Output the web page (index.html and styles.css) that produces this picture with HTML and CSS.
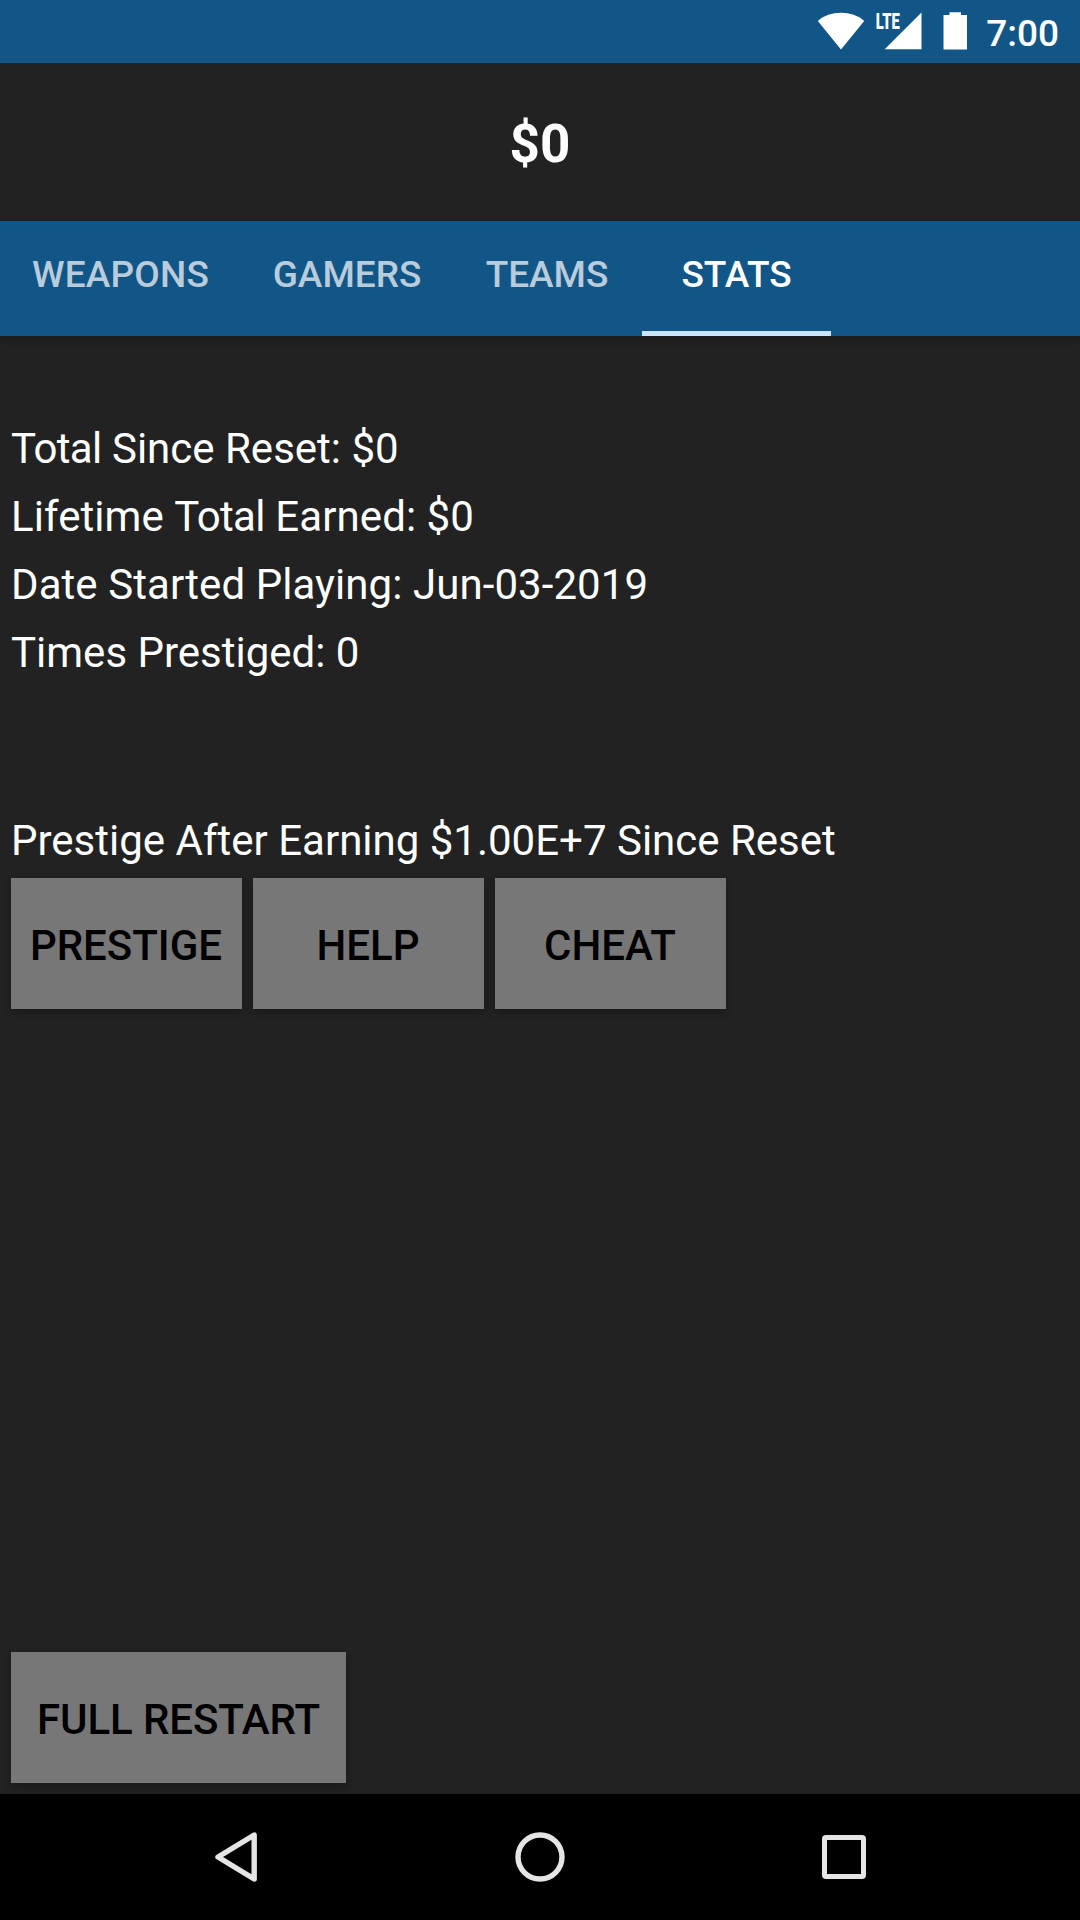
FILE: index.html
```html
<!DOCTYPE html>
<html lang="en">
<head>
<meta charset="utf-8">
<title>Stats</title>
<link rel="stylesheet" href="styles.css">
</head>
<body>
<header class="status">
  <svg class="status-icons" viewBox="0 0 160 63" width="160" height="63" fill="#fff">
    <path d="M24 49.500 0.800 21C7 15.500 15 12.800 24 12.800S41 15.500 47.200 21Z"/>
    <path d="M104.500 12.500V49.300H67.700Z"/>
    <path class="gap" d="M58 10H83V30.500H58Z"/>
    <g transform="translate(58.800 29) scale(1 1.250)">
      <text class="lte" textLength="24" lengthAdjust="spacingAndGlyphs">LTE</text>
    </g>
    <path d="M132.500 12.300h11.500v2.700h6v34.500h-23.500v-34.500h6z"/>
  </svg>
  <span class="clock">7:00</span>
</header>
<div class="money">$0</div>
<nav class="tabs">
  <a class="tab weapons">WEAPONS</a>
  <a class="tab gamers">GAMERS</a>
  <a class="tab teams">TEAMS</a>
  <a class="tab stats active">STATS</a>
</nav>
<main class="content">
  <div class="lines">
    <div><span class="tight">Total</span> Since Reset: $0</div>
    <div class="wide">Lifetime <span class="tight">Total</span> Earned: $0</div>
    <div class="wide">Date Started Playing: Jun-03-2019</div>
    <div>Times Prestiged: 0</div>
  </div>
  <div class="notice">Prestige After Earning $1.00E+7 Since Reset</div>
  <div class="actions">
    <button class="btn">PRESTIGE</button>
    <button class="btn">HELP</button>
    <button class="btn">CHEAT</button>
  </div>
  <button class="btn restart">FULL RESTART</button>
</main>
<footer class="navbar">
  <svg viewBox="0 0 1080 126" width="1080" height="126" fill="none" stroke="#e5e5e5" stroke-width="5.400" stroke-linejoin="round">
    <path d="M254.200 41V85L218 63Z"/>
    <circle cx="540" cy="63" r="22"/>
    <rect x="824.500" y="43.500" width="39" height="39" rx="1.500" stroke-width="5"/>
  </svg>
</footer>
</body>
</html>
```
FILE: styles.css
```css
* { box-sizing: border-box; }
body {
  margin: 0;
  width: 1080px;
  height: 1920px;
  display: flex;
  flex-direction: column;
  background: #222;
  color: #fff;
  font-family: Roboto, sans-serif;
  overflow: hidden;
}
.status {
  height: 63px;
  background: #125687;
  display: flex;
  justify-content: flex-end;
  padding-right: 21px;
}
.status-icons { margin-right: 9px; }
.gap { fill: #125687; }
.lte { font: 900 18px Roboto, sans-serif; }
.clock { font-size: 37px; font-weight: 500; line-height: 68px; }
.money {
  height: 158px;
  text-align: center;
  font-size: 53px;
  font-weight: 700;
  line-height: 163px;
}
.tabs {
  height: 115px;
  display: flex;
  background: #125687;
  box-shadow: 0 4px 10px rgba(0, 0, 0, .2);
}
.tab {
  height: 115px;
  text-align: center;
  font-size: 37px;
  font-weight: 500;
  line-height: 107px;
  color: #b8ccdb;
}
.weapons { width: 241px; letter-spacing: .2px; }
.gamers { width: 212px; }
.teams { width: 189px; padding-right: 1px; }
.stats { width: 189px; }
.active { color: #fff; border-bottom: 5px solid #c8e6ff; }
.content {
  flex: 1;
  display: flex;
  flex-direction: column;
  padding: 79px 11px 11px;
  font-size: 42px;
}
.lines { line-height: 68px; }
.wide { letter-spacing: .07px; }
.tight { letter-spacing: -.65px; }
.notice { margin-top: 120px; line-height: 68px; }
.actions { display: flex; gap: 11px; margin-top: 3px; }
.btn {
  width: 231px;
  height: 131px;
  padding: 4px 1px 0 0;
  border: 0;
  background: #777;
  color: #000;
  font: 500 42px Roboto, sans-serif;
  box-shadow: 0 4px 8px rgba(0, 0, 0, .25);
}
.restart { width: 335px; margin-top: auto; padding-right: 0; letter-spacing: -.1px; }
.navbar { height: 126px; background: #000; position: relative; }
.navbar svg { display: block; }
```
